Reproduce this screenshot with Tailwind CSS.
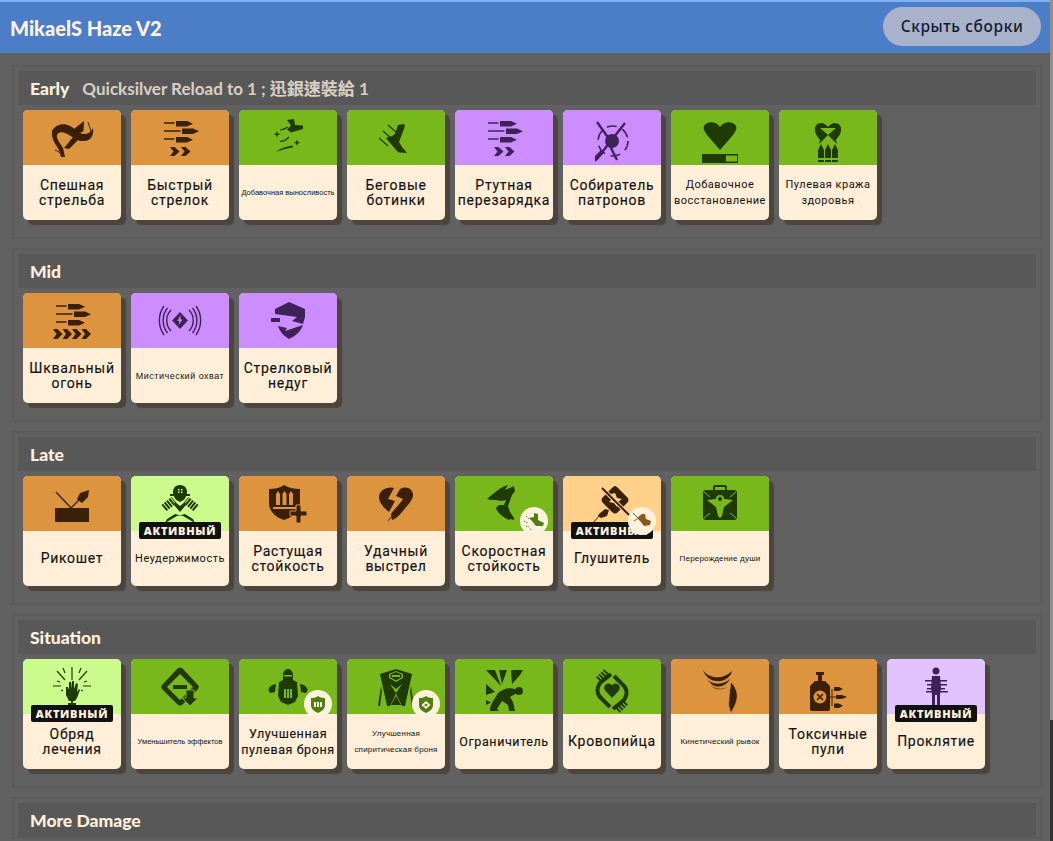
<!DOCTYPE html>
<html lang="ru">
<head>
  <meta charset="UTF-8" />
  <title>MikaelS Haze V2</title>
  <script src="https://cdn.jsdelivr.net/npm/@tailwindcss/browser@4"></script>
</head>
<body class="bg-[#616161] h-[841px] overflow-hidden">

  <div class="flex h-[841px] overflow-hidden">
    <div class="w-[1050px] shrink-0">
      <header class="h-[53px] bg-[#4c7ec8] border-t-2 border-[#7fb1f4] pl-[10px] pr-[9px] flex justify-between items-center">
        <h1 class="font-['Lato',sans-serif] text-[20px] font-black text-[#fff1dd]">MikaelS Haze V2</h1>
        <button class="w-[158px] h-[39px] mt-[-2px] rounded-full bg-[#a8b2cb] text-[#101a30] font-['Noto_Sans',sans-serif] text-[15.5px] font-medium tracking-[0.6px]">Скрыть сборки</button>
      </header>
      <main id="sections" class="pt-[12px] pl-[12px] pr-[8px]"></main>
    </div>
    <div class="w-[3px] shrink-0">
      <div class="h-[720px] bg-[#8f8f8f]"></div>
      <div class="h-[121px] bg-[#333333]"></div>
    </div>
  </div>

  <script>
    const ORANGE = "bg-[#dc943f] text-[#392006]";
    const GREEN = "bg-[#78b81a] text-[#1f3a02]";
    const PURPLE = "bg-[#cc8eff] text-[#3f2358]";
    const ACT_GREEN = "bg-[#ccfb8d] text-[#1f3a02]";
    const ACT_ORANGE = "bg-[#ffd08a] text-[#392006]";
    const ACT_PURPLE = "bg-[#e3c3ff] text-[#3f2358]";

    const XL = "font-['Roboto',sans-serif] [-webkit-text-stroke:0.15px] text-[14px] leading-[15px] tracking-[0.7px]";
    const LG = "font-['Roboto',sans-serif] [-webkit-text-stroke:0.15px] text-[12.500px] leading-[16px] tracking-[0.6px]";
    const MD = "font-['Roboto',sans-serif] text-[11px] leading-[16px] tracking-[0.5px]";
    const MYSTIC = "font-['Liberation_Sans',sans-serif] text-[9px] leading-[16px] tracking-[0.5px] whitespace-nowrap";
    const SM = "font-['Liberation_Sans',sans-serif] text-[8px] leading-[16px] tracking-[0.2px] whitespace-nowrap";
    const XS = "font-['Liberation_Sans',sans-serif] text-[7.500px] leading-[16px] whitespace-nowrap";

    const bullets = `<path d="M33 12.300h10.500v1.500H33zM45 11h11l6 2.800-6 2.800H45zM33 20.300h16.500v1.500H33zM51 18.500h11l6 2.800-6 2.800H51zM33 28.300h10.500v1.500H33zM45 27h11l6 2.800-6 2.800H45z"/>`;
    const chevrons2 = `<path d="M39 37h4.500l5 4.500-5 4.500H39l3.500-4.500zM50 37h4.500l5 4.500-5 4.500H50l3.500-4.500z"/>`;
    const chevrons4 = `<path d="M30 36h4.500l5 5-5 5H30l3.500-5zM39.500 36H44l5 5-5 5h-4.500l3.500-5zM49 36h4.500l5 5-5 5H49l3.500-5zM58.500 36H63l5 5-5 5h-4.500l3.500-5z"/>`;

    const icons = {
      rapid: `<path d="M29 21c3-6 11-9 18-5 6 3 9 8 14 8 4 0 7-2 9-6 1 7-2 13-9 13-7 1-12-5-17-7-5-3-9-2-10 1-1 4 4 9 6 13l2 9h-4l-2-7c-3-5-8-11-7-19z"/><path d="M51 19l10-8-.5 10-5 3zM41 38l9-11 5 3-9 9z"/><path d="M40 47c-2-4-5-6-8-7M65 12l3 9" fill="none" stroke="currentColor"/>`,
      stamina: `<path d="M48 10l7-1 1 6 8 .5v3.500l-12 3.500-4-3 4-4z"/><path d="M38 21l.9 2.300 2.300.9-2.300.9-.9 2.300-.9-2.300-2.300-.9 2.300-.9zM58 29.500l.9 2.300 2.300.9-2.300.9-.9 2.300-.9-2.300-2.300-.9 2.300-.9zM37 42c5-4 11-6 17-6.500l-.5 2c-6 .5-11 2.500-16.500 4.500z"/><path d="M41 31c3 1 6-1 9-4M41 20c3 0 6-2 8-3" fill="none" stroke="currentColor" stroke-width="1.200"/>`,
      boots: `<path d="M51 15l6-1 1 2-6 16 3 5 5 6-4 0-1-1-1 1-3-1-1-1-7-8-4-5 6-2 3-2z"/><path d="M41 15l9 8M36 21l10 9M32 28l9 8" fill="none" stroke="currentColor" stroke-width="1.200"/>`,
      collector: `<circle cx="49" cy="31" r="7"/><circle cx="50" cy="31" r="15" fill="none" stroke="currentColor" stroke-width="1.500" stroke-dasharray="10 6"/><path d="M34 12l15 21M62 13L33 50M47 36l7 14" fill="none" stroke="currentColor" stroke-width="2.400"/><path d="M32 46l6-6 3 3-6 6-3 3z"/>`,
      regen: `<path d="M49 40L36 25c-3-4-4-7-3-9 2-4 11-6 16 1 5-7 14-5 16-1 1 2 0 5-3 9z"/><path d="M31 44h36v9H31zm1.500 1.500v6H66v-6z" fill-rule="evenodd"/><path d="M32 45h23v7H32z"/>`,
      lifesteal: `<path d="M49 17c-5-7-14-4-13 3 0 4 3 7 5 10l-1 4 9-9 9 9-1-4c2-3 5-6 5-10 1-7-8-10-13-3z"/><path d="M41 18h16l-8 7z" fill="#78b81a"/><path d="M42 34l3 6v8h-6v-8zM49 34l3 6v8h-6v-8zM56 34l3 6v8h-6v-8zM39 50h6v2h-6zM46 50h6v2h-6zM53 50h6v2h-6z"/>`,
      mystic: `<path d="M49 19l8 8.500-8 8.500-8-8.500z"/><path d="M49.500 22l-3 6h2l-.8 4 3.800-5.500h-2z" fill="#cc8eff"/><g fill="none" stroke="currentColor" stroke-width="1.400"><path d="M40 17a15 15 0 0 0 0 21M36.500 15a20 20 0 0 0 0 25M33 13a25 25 0 0 0 0 29M58 17a15 15 0 0 1 0 21M61.500 15a20 20 0 0 1 0 25M65 13a25 25 0 0 1 0 29"/></g>`,
      ail: `<path d="M50 9l16 7v8l-2 7-11-3 5-4-22-3v-5z"/><path d="M32 25h9v4h-9z"/><path d="M39 33l9 2-2 3 9-3 9-3c-2 6-7 11-14 14-5-3-9-7-11-13z"/>`,
      ricochet: `<path d="M32 32h34v14H32z"/><path d="M33 16l15 16 8-8" fill="none" stroke="currentColor" stroke-width="1.400"/><path d="M54 23l3-6 9-3-1 7-6 6z"/>`,
      unstop: `<path d="M49 9c5 0 7.500 4 7 8-.5 3-2 6-3.500 7l-3.500 2-3.500-2c-1.500-1-3-4-3.500-7-.5-4 2-8 7-8z"/><path d="M39 18h20v2H39z"/><path d="M33 32l10-8M65 32l-10-8" fill="none" stroke="currentColor" stroke-width="8" stroke-dasharray="2 1"/><path d="M44 26l5 4 5-4 1 3-6 7-6-7z"/><path d="M34 47l2-4 8-5 8 2 12 7zM64 47l-2-4-8-5-8 2-12 7z"/><path d="M47 13h1.500v1.500H47zM50 13h1.500v1.500H50zM47 15.500h1.500V17H47zM50 15.500h1.500V17H50z" fill="#ccfb8d"/>`,
      growing: `<path d="M45 9c5 3 11 4 16 4v14c0 8-7 14-16 17-9-3-15-9-15-17V13c5 0 11-1 15-4z"/><path d="M37 18l2-3 2 3v11h-4zM43.500 18l2-3 2 3v11h-4zM50 18l2-3 2 3v11h-4zM34 31h24v2H34z" fill="#dc943f"/><path d="M57 29h5v6h6v5h-6v7h-5v-7h-6v-5h6z" stroke="#dc943f" stroke-width="1"/>`,
      lucky: `<path d="M47 12l-6 11 7 2-6 11c-5-4-10-9-10-15 0-7 9-11 15-9zM53 13c6-4 14 0 13 7-1 5-6 10-11 16-3 4-7 7-10 8l-1-6c4-6 9-10 12-15l-7-3 4-7"/><path d="M41 45l4-5" stroke="currentColor" fill="none"/>`,
      swift: `<path d="M32 23c6-5 13-12 21-14l-3 5 9-4 1 5-3 4-4 11 2 6 4 6v2l-4-1-1 1-4-2c-4-3-8-6-9-10l3-3 5 0 2-5-5 1-5-1-5 0z"/>`,
      silencer: `<path d="M52 10c1 0 2 1 3 2l9 9c2 2 2 4 0 6l-9 9c-2 2-4 2-6 0l-9-9c-2-2-2-4 0-6l9-9c1-1 2-2 3-2z"/><path d="M52 17l2 5 5 1-4 3-1 5-3-4-5-1 3-3-1-5z" fill="#ffd08a"/><path d="M39 12l27 27" stroke="#ffd08a" stroke-width="4"/><path d="M39 12l27 27" stroke="currentColor" stroke-width="2"/><path d="M36 38l6-5 4 1-2 6-6 2-3-2z"/><path d="M36 40l-6 7" stroke="currentColor" fill="none"/>`,
      rebirth: `<path fill-rule="evenodd" d="M42 14v-3c0-1 1-2 2-2h10c1 0 2 1 2 2v3h7c2 0 3 1 3 3v24c0 2-1 3-3 3H35c-2 0-3-1-3-3V17c0-2 1-3 3-3zm2 0h10v-3H44zM49 19c-3 0-4 2-4 4l-9 1 9 7 2 9 2 2 2-2 2-9 9-7-9-1c0-2-1-4-4-4z"/><path d="M47 23c0-3 4-3 4 0l-1 2h-2z" /><path d="M33 16l6 5M65 16l-6 5M33 42l6-5M65 42l-6-5" stroke="#78b81a" stroke-width="1"/>`,
      ritual: `<path d="M43 28l2 0 1 3v-8h2v7l1-8h2l0 8 2-6 2 1-1 8 2-3 1 1-3 8-2 3h-6l-3-6z"/><path d="M48 41h2v3h3v2h-3v4h-2v-4h-3v-2h3z"/><path d="M49 8v13M34 12l8 9M64 12l-8 9M30 27h8M60 27h8M40 9l2 5M58 9l-2 5M34 22l3 1M64 22l-3 1M38 32l2-1M60 32l-2-1" fill="none" stroke="currentColor" stroke-width="1.200"/>`,
      reducer: `<path fill-rule="evenodd" d="M46 10c2-2 4-2 6 0l15 16c1 1 1 3 0 4l-15 15c-2 2-4 2-6 0L31 30c-1-1-1-3 0-4zm3 5L36 28l13 13 13-13z"/><path d="M42 26h14v4H42z"/><path d="M55 31h8v8h4l-8 8-8-8h4z" stroke="#78b81a" stroke-width="1"/>`,
      bulletarmor: `<path d="M49 10c3 0 5 3 5 6v5l4 2 1 14-3 6-7 3-7-3-3-6 1-14 4-2v-5c0-3 2-6 5-6z"/><path d="M30 29c2-3 5-4 7-4l-1 8-4 1c-2 0-3-3-2-5zM68 29c-2-3-5-4-7-4l1 8 4 1c2 0 3-3 2-5z"/><path d="M45 30h2v9h-2zM48 30h2v9h-2zM51 30h2v9h-2zM45 16h8v1.500h-8z" fill="#78b81a"/>`,
      spiritarmor: `<path fill-rule="evenodd" d="M33 15l16-5 16 5-7 32h-3l-1-2-4-8-1-3 6-9-6 5-6-5 6 9-1 3-4 8-1 2h-3z"/><path d="M42 15l7-3 7 3v4l-7 4-7-4z" fill="#78b81a"/><path d="M43.500 15.500l5.500-2.500 5.500 2.500v3l-5.500 3-5.500-3z"/><path d="M45 16h8v2h-8z" fill="#78b81a"/><path d="M31 47l3-20 .8 6L33 47zM67 47l-3-20-.8 6L65 47zM44 46l5-9 5 9z"/>`,
      limiter: `<path d="M31 11h9l6 16zM44 11h8l-5 14zM56 11h12l-3 5-8 9zM31 25l9 8-9 3zM31 41l5 2.500-5 2.500z"/><circle cx="64" cy="32" r="4"/><path d="M60 30c-6-2-12 0-17 4l-6 10-2 5v3h9l-2-2 5-8 6 4 1 6h6l-2-9-3-5 5-3 3-1z"/>`,
      bloodsucker: `<path d="M49 39l-7-7.500c-2-3 0-7 3.300-7 1.500 0 2.700 .5 3.700 2 1-1.500 2.200-2 3.700-2 3.300 0 5.300 4 3.300 7z"/><g fill="none" stroke="currentColor"><path d="M48 15 37 24c-4 6-3 12 2 16l8 8M50 50l11-9c4-6 3-12-2-16l-8-8" stroke-width="4"/><path d="M44 13l-9 9M54 51l9-9" stroke-width="8" stroke-dasharray="2 1.200"/></g>`,
      kinetic: `<path d="M32 11c6 9 20 10 29 1-1 6-8 11-15 10-7 0-12-5-14-11z"/><path d="M35 19c6 7 17 7 25 0-3 6-8 9-13 9-5 0-9-4-12-9zM39 26c6 4 12 4 18 2-5 4-13 4-18-2z" stroke="#dc943f" stroke-width=".8"/><path d="M60 23c5 5 7 11 6 17-1 6-4 10-6 14-2-4-3-9-2-13 0-6 1-12 2-18z" stroke="#dc943f" stroke-width=".8"/>`,
      toxic: `<path d="M37 13h8v3h-2v6h3l5 5v23c0 1-1 2-2 2H33c-1 0-2-1-2-2V27l5-5h3v-6h-2z"/><circle cx="41" cy="38" r="6.500" fill="#dc943f"/><path d="M38 35l6 6M44 35l-6 6" stroke="currentColor" stroke-width="1.700"/><path d="M47 38h10M53 38v-8M53 38v9" fill="none" stroke="currentColor"/><path d="M55 28h5l4 2-4 2h-5zM57 36h6l5 2-5 2h-6zM55 44.500h5l4 2.200-4 2.200h-5z"/>`,
      curse: `<circle cx="49" cy="12" r="3.500"/><path d="M45 17h8l1 12-1 7v11h-3V36h-2v11h-3V36l-1-7z"/><path d="M38 21h22v1.500H38zM40 25h20v1.500H40zM40 29h18v1.500H40zM39 32h22v1.500H39z"/>`,
      // little round icons in the corner
      miniBoot: `<path d="M14 6l4 1 0 6 6 3-1 3-7 0-4-5-3-3 5-1z" fill="#4e7f10"/><path d="M6 9l3 3M4 14l4 2M6 19l3 1M10 22l2 1" stroke="#4e7f10" stroke-dasharray="1.500 1"/>`,
      miniBoot2: `<path d="M14 7l3 0 1 5 5 2-1 4-6 1-4-5-3-3z" fill="#8a5a1c"/><path d="M5 6l6 6M6 14l3-2" stroke="#8a5a1c"/>`,
      miniBullet: `<path fill-rule="evenodd" d="M14 6c3 2 5 2 7 2v7c0 4-3 6-7 8-4-2-7-4-7-8V8c2 0 4 0 7-2zm-4 6v5h2v-5zm3 0v5h2v-5zm3 0v5h2v-5z" fill="#4e7f10"/>`,
      miniSpirit: `<path fill-rule="evenodd" d="M14 6c3 2 5 2 7 2v7c0 4-3 6-7 8-4-2-7-4-7-8V8c2 0 4 0 7-2zm0 5l-4.500 4 4.500 4 4.500-4z" fill="#4e7f10"/><path d="M14 13.500l1.800 1.500-1.800 1.500-1.800-1.500z" fill="#4e7f10"/>`
    };

    const data = [
      { title: "Early", note: "Quicksilver Reload to 1 ; 迅銀速裝給 1", items: [
        { name: "Спешная<br>стрельба", head: ORANGE, icon: icons.rapid, size: XL },
        { name: "Быстрый<br>стрелок", head: ORANGE, icon: bullets + chevrons2, size: XL },
        { name: "Добавочная выносливость", head: GREEN, icon: icons.stamina, size: XS },
        { name: "Беговые<br>ботинки", head: GREEN, icon: icons.boots, size: XL },
        { name: "Ртутная<br>перезарядка", head: PURPLE, icon: bullets + chevrons2, size: XL },
        { name: "Собиратель<br>патронов", head: PURPLE, icon: icons.collector, size: XL },
        { name: "Добавочное<br>восстановление", head: GREEN, icon: icons.regen, size: MD },
        { name: "Пулевая кража<br>здоровья", head: GREEN, icon: icons.lifesteal, size: MD }
      ]},
      { title: "Mid", items: [
        { name: "Шквальный<br>огонь", head: ORANGE, icon: bullets + chevrons4, size: XL },
        { name: "Мистический охват", head: PURPLE, icon: icons.mystic, size: MYSTIC },
        { name: "Стрелковый<br>недуг", head: PURPLE, icon: icons.ail, size: XL }
      ]},
      { title: "Late", items: [
        { name: "Рикошет", head: ORANGE, icon: icons.ricochet, size: XL },
        { name: "Неудержимость", head: ACT_GREEN, icon: icons.unstop, size: MD, active: true },
        { name: "Растущая<br>стойкость", head: ORANGE, icon: icons.growing, size: XL },
        { name: "Удачный<br>выстрел", head: ORANGE, icon: icons.lucky, size: XL },
        { name: "Скоростная<br>стойкость", head: GREEN, icon: icons.swift, size: XL, mini: icons.miniBoot },
        { name: "Глушитель", head: ACT_ORANGE, icon: icons.silencer, size: XL, active: true, mini: icons.miniBoot2 },
        { name: "Перерождение души", head: GREEN, icon: icons.rebirth, size: SM }
      ]},
      { title: "Situation", items: [
        { name: "Обряд<br>лечения", head: ACT_GREEN, icon: icons.ritual, size: XL, active: true },
        { name: "Уменьшитель эффектов", head: GREEN, icon: icons.reducer, size: XS },
        { name: "Улучшенная<br>пулевая броня", head: GREEN, icon: icons.bulletarmor, size: LG, mini: icons.miniBullet },
        { name: "Улучшенная<br>спиритическая броня", head: GREEN, icon: icons.spiritarmor, size: SM, mini: icons.miniSpirit },
        { name: "Ограничитель", head: GREEN, icon: icons.limiter, size: LG },
        { name: "Кровопийца", head: GREEN, icon: icons.bloodsucker, size: XL },
        { name: "Кинетический рывок", head: ORANGE, icon: icons.kinetic, size: SM },
        { name: "Токсичные<br>пули", head: ORANGE, icon: icons.toxic, size: XL },
        { name: "Проклятие", head: ACT_PURPLE, icon: icons.curse, size: XL, active: true }
      ]},
      { title: "More Damage", items: [] }
    ];

    function renderCard(item) {
      const badge = item.active
        ? `<div class="absolute left-[8px] top-[46px] w-[82px] h-[17px] bg-[#111111] rounded-[2px] flex items-center justify-center font-['Open_Sans',sans-serif] text-[11px] leading-none font-extrabold tracking-[0.7px] text-[#fff1dd]">АКТИВНЫЙ</div>`
        : "";
      const mini = item.mini
        ? `<div class="absolute left-[65px] top-[31px] w-[28px] h-[28px] rounded-full bg-[#fff1dd]"><svg class="w-full h-full" viewBox="0 0 28 28" fill="none">${item.mini}</svg></div>`
        : "";
      return `
        <div class="relative w-[98px] h-[110px] rounded-[5px] bg-[#ffefd9] shadow-[5px_5px_1px_#4b453d] shrink-0">
          <div class="h-[55px] rounded-t-[5px] ${item.head}">
            <svg class="block w-full h-full" viewBox="0 0 98 55" fill="currentColor">${item.icon}</svg>
          </div>
          ${badge}${mini}
          <div class="h-[55px] flex items-center justify-center text-center text-[#141210] ${item.size}"><span>${item.name}</span></div>
        </div>`;
    }

    function renderSection(section) {
      const note = section.note
        ? `<span class="ml-[13px] text-[17px] font-bold text-[#d9d0c3]">${section.note}</span>`
        : "";
      const row = section.items.length
        ? `<div class="flex gap-[10px] pl-[5px] mt-[5px] pb-[17px]">${section.items.map(renderCard).join("")}</div>`
        : "";
      return `
        <section class="border-2 border-[#5c5c5c] p-[4px] pb-0 mb-[9px]">
          <div class="h-[34px] pl-[12px] pt-[2px] bg-[#585858] flex items-center font-['Lato','Noto_Sans_CJK_TC',sans-serif] text-[17.500px] font-black text-[#fff1dd]">
            <span>${section.title}</span>${note}
          </div>
          ${row}
        </section>`;
    }

    document.getElementById("sections").innerHTML = data.map(renderSection).join("");
  </script>
</body>
</html>
